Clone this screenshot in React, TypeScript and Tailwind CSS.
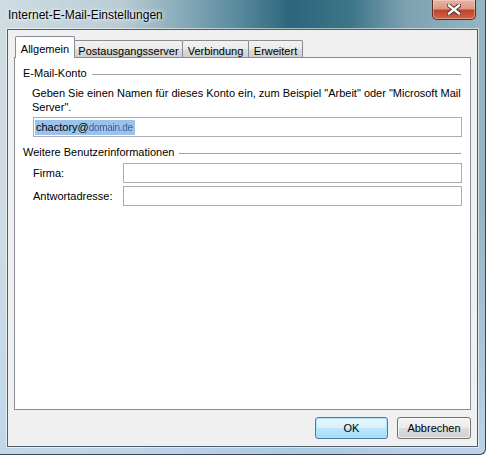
import React from 'react';

const font = "font-['Segoe_UI','Liberation_Sans',Arial,sans-serif]";

const Tab: React.FC<{ label: string; width: string; active?: boolean }> = ({ label, width, active }) => {
    if (active) {
        return (
            <div className={`${width} h-[22px] -mb-px relative z-10 bg-white border border-b-0 border-[#898c95] flex items-start justify-center pt-[4px] rounded-t-[2px]`}>
                {label}
            </div>
        );
    }
    return (
        <div className={`${width} h-[17px] -ml-px border border-b-0 border-[#898c95] bg-[linear-gradient(180deg,#f2f2f2_0%,#ebebeb_50%,#dddddd_50%,#cfcfcf_100%)] flex items-start justify-center pt-[2px] rounded-t-[2px]`}>
            {label}
        </div>
    );
};

const GroupHeader: React.FC<{ label: string }> = ({ label }) => (
    <div className="flex items-center h-[15px]">
        <span className="pl-[8px] pr-[5px] whitespace-nowrap">{label}</span>
        <div className="flex-1 border-t border-[#a0a0a0] mr-[9px] mt-[1px]" />
    </div>
);

const TextBox: React.FC<{ className?: string; children?: React.ReactNode }> = ({ className = '', children }) => (
    <div className={`bg-white border border-[#abadb3] flex items-center px-[1px] ${className}`}>
        {children}
    </div>
);

const CloseButton: React.FC = () => (
    <div className="w-[44px] h-[20px] rounded-b-[5px] border border-t-0 border-[#5b2a22] bg-[linear-gradient(180deg,#e8b4a6_0%,#d99a86_45%,#c2432b_55%,#cf6447_100%)] shadow-[inset_0_0_0_1px_rgba(255,220,210,0.45)] flex items-center justify-center">
        <svg width="14" height="11" viewBox="0 0 14 11">
            <path d="M2 1.5 L12 9.5 M12 1.5 L2 9.5" stroke="#4a2018" strokeWidth="4.2" strokeLinecap="square" />
            <path d="M2 1.5 L12 9.5 M12 1.5 L2 9.5" stroke="#ffffff" strokeWidth="2.4" strokeLinecap="square" />
        </svg>
    </div>
);

const App: React.FC = () => {
    return (
        <div className={`${font} text-[11px] text-black w-[486px] h-[455px] overflow-hidden`}>
            <div className="w-[486px] h-[455px] flex flex-col border-r border-b border-[#3a4651] rounded-br-[6px] bg-[linear-gradient(180deg,rgba(255,255,255,0)_0%,rgba(255,255,255,0)_45%,rgba(190,214,236,0.9)_100%),linear-gradient(90deg,#cfdde3_0%,#b9ccd5_25%,#5d8da0_48%,#2c667b_60%,#3d7488_72%,#7ea2b1_84%,#97b5c2_100%)]">
                {/* title bar */}
                <div className="h-[29px] flex items-start justify-between pl-[8px] pr-[9px]">
                    <span className="mt-[6px] text-[12px] [text-shadow:0_0_6px_rgba(255,255,255,0.95),0_0_3px_rgba(255,255,255,0.9)]">Internet-E-Mail-Einstellungen</span>
                    <CloseButton />
                </div>

                {/* client area */}
                <div className="flex-1 mx-[7px] mb-[7px] border border-[#4e5e6b] bg-[#f0f0f0] shadow-[0_0_0_1px_rgba(255,255,255,0.55)] flex flex-col pl-[6px] pr-[6px] pt-[6px] pb-[7px]">
                    <div className="flex items-end h-[21px] pl-[1px]">
                        <Tab label="Allgemein" width="w-[60px]" active />
                        <Tab label="Postausgangsserver" width="w-[109px]" />
                        <Tab label="Verbindung" width="w-[67px]" />
                        <Tab label="Erweitert" width="w-[55px]" />
                    </div>

                    <div className="flex-1 w-[457px] bg-white border border-[#898c95] pt-[8px]">
                        <GroupHeader label="E-Mail-Konto" />
                        <p className="pl-[17px] mt-[5px] leading-[14px] whitespace-nowrap">
                            Geben Sie einen Namen für dieses Konto ein, zum Beispiel "Arbeit" oder "Microsoft Mail
                            <br />
                            Server".
                        </p>
                        <TextBox className="ml-[18px] mr-[8px] mt-[3px] h-[20px]">
                            <span className="bg-[#99c2ec] h-[15px] leading-[15px] pl-[1px] pr-[2px] flex items-center text-[11px]">
                                chactory@
                                <span className="text-[10px] blur-[0.7px] text-[#4a5a8a] tracking-[-0.3px]">domain.de</span>
                            </span>
                        </TextBox>

                        <div className="mt-[8px]">
                            <GroupHeader label="Weitere Benutzerinformationen" />
                        </div>
                        <div className="flex items-center mt-[3px] pl-[18px] pr-[8px]">
                            <span className="w-[90px]">Firma:</span>
                            <TextBox className="flex-1 h-[20px]" />
                        </div>
                        <div className="flex items-center mt-[3px] pl-[18px] pr-[8px]">
                            <span className="w-[90px]">Antwortadresse:</span>
                            <TextBox className="flex-1 h-[20px]" />
                        </div>
                    </div>

                    <div className="flex justify-end gap-[9px] mt-[7px]">
                        <button className="w-[73px] h-[22px] rounded-[3px] border border-[#3c7fb1] bg-[linear-gradient(180deg,#eaf6fd_0%,#d9f0fc_50%,#bee6fd_50%,#a7d9f5_100%)] shadow-[inset_0_0_0_1px_rgba(170,230,255,0.9)] leading-none">
                            OK
                        </button>
                        <button className="w-[74px] h-[22px] rounded-[3px] border border-[#707070] bg-[linear-gradient(180deg,#f2f2f2_0%,#ebebeb_50%,#dddddd_50%,#cfcfcf_100%)] shadow-[inset_0_0_0_1px_rgba(255,255,255,0.7)] leading-none">
                            Abbrechen
                        </button>
                    </div>
                </div>
            </div>
        </div>
    );
};

export default App;
